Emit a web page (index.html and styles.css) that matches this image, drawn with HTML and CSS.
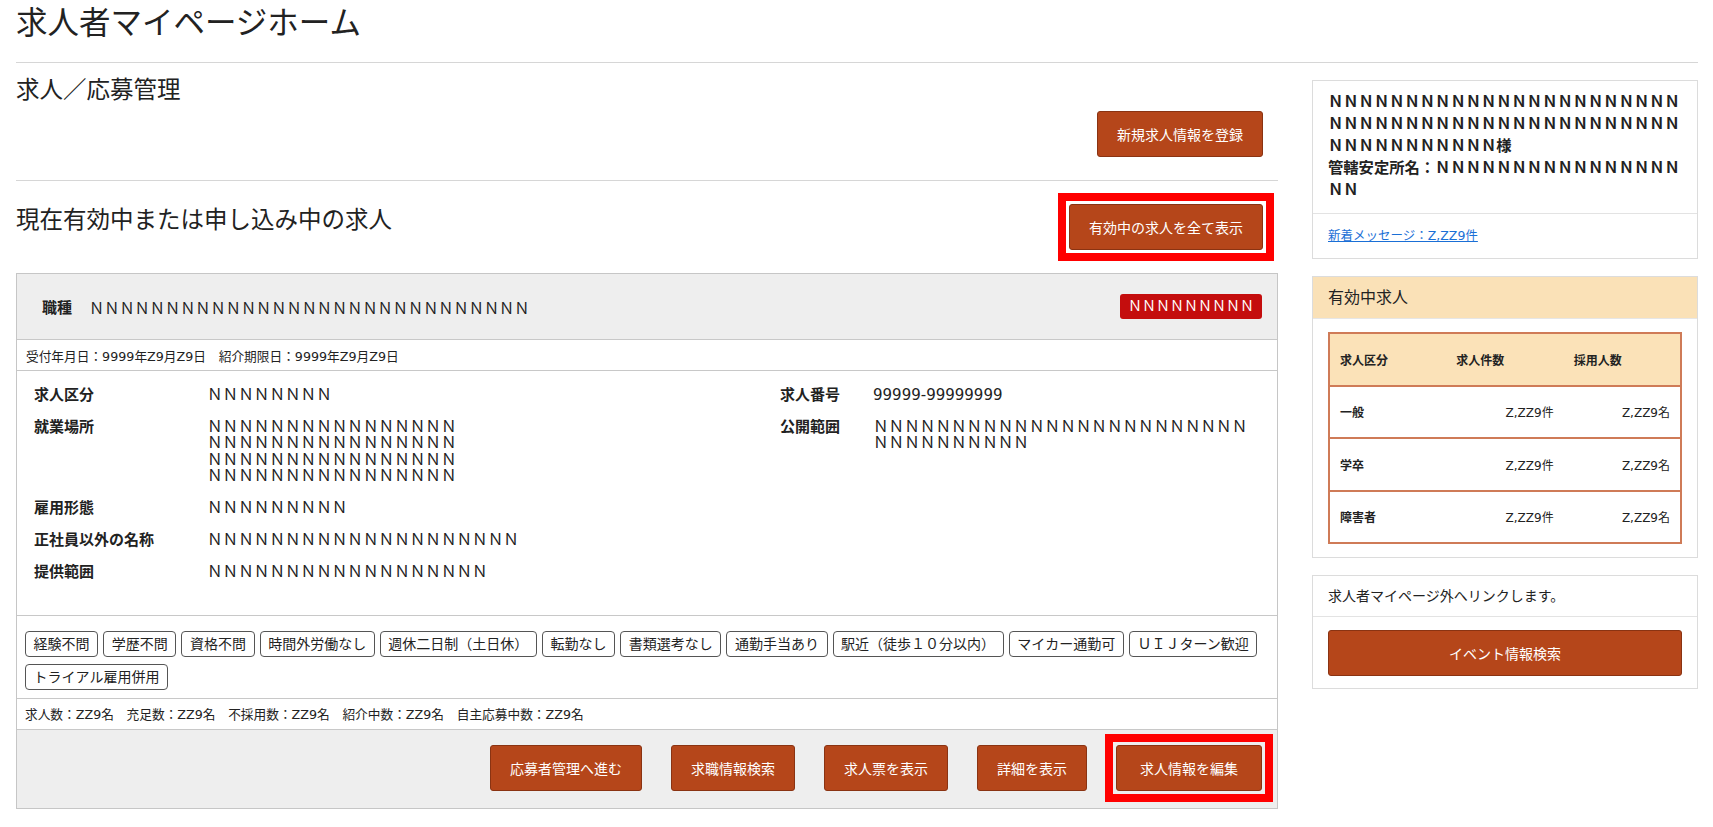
FILE: index.html
```html
<!DOCTYPE html>
<html lang="ja">
<head>
<meta charset="utf-8">
<title>求人者マイページホーム</title>
<link rel="stylesheet" href="styles.css">
</head>
<body>
<div class="page">
  <h1 class="page-title">求人者マイページホーム</h1>
  <div class="layout">
    <main class="main-col">
      <section class="sec-manage">
        <h2 class="sec-title">求人／応募管理</h2>
        <div class="btn-row"><a class="btn" href="#">新規求人情報を登録</a></div>
      </section>
      <section class="sec-active">
        <div class="active-head">
          <h2 class="sec-title">現在有効中または申し込み中の求人</h2>
          <a class="btn mark" href="#">有効中の求人を全て表示</a>
        </div>
        <article class="card">
          <div class="card-head">
            <span class="job-label">職種</span>
            <span class="job-name">ＮＮＮＮＮＮＮＮＮＮＮＮＮＮＮＮＮＮＮＮＮＮＮＮＮＮＮＮＮ</span>
            <span class="badge">ＮＮＮＮＮＮＮＮＮ</span>
          </div>
          <div class="card-dates">受付年月日：9999年Z9月Z9日　紹介期限日：9999年Z9月Z9日</div>
          <div class="card-details">
            <dl class="dlist dlist-left">
              <div class="drow"><dt>求人区分</dt><dd>ＮＮＮＮＮＮＮＮ</dd></div>
              <div class="drow"><dt>就業場所</dt><dd>ＮＮＮＮＮＮＮＮＮＮＮＮＮＮＮＮ<br>ＮＮＮＮＮＮＮＮＮＮＮＮＮＮＮＮ<br>ＮＮＮＮＮＮＮＮＮＮＮＮＮＮＮＮ<br>ＮＮＮＮＮＮＮＮＮＮＮＮＮＮＮＮ</dd></div>
              <div class="drow"><dt>雇用形態</dt><dd>ＮＮＮＮＮＮＮＮＮ</dd></div>
              <div class="drow"><dt>正社員以外の名称</dt><dd>ＮＮＮＮＮＮＮＮＮＮＮＮＮＮＮＮＮＮＮＮ</dd></div>
              <div class="drow"><dt>提供範囲</dt><dd>ＮＮＮＮＮＮＮＮＮＮＮＮＮＮＮＮＮＮ</dd></div>
            </dl>
            <dl class="dlist dlist-right">
              <div class="drow"><dt>求人番号</dt><dd class="num">99999-99999999</dd></div>
              <div class="drow"><dt>公開範囲</dt><dd>ＮＮＮＮＮＮＮＮＮＮＮＮＮＮＮＮＮＮＮＮＮＮＮＮＮＮＮＮＮＮＮＮＮＮ</dd></div>
            </dl>
          </div>
          <div class="card-tags">
            <span class="tag">経験不問</span>
            <span class="tag">学歴不問</span>
            <span class="tag">資格不問</span>
            <span class="tag">時間外労働なし</span>
            <span class="tag">週休二日制（土日休）</span>
            <span class="tag">転勤なし</span>
            <span class="tag">書類選考なし</span>
            <span class="tag">通勤手当あり</span>
            <span class="tag">駅近（徒歩１０分以内）</span>
            <span class="tag">マイカー通勤可</span>
            <span class="tag">ＵＩＪターン歓迎</span>
            <span class="tag">トライアル雇用併用</span>
          </div>
          <div class="card-counts">求人数：ZZ9名　充足数：ZZ9名　不採用数：ZZ9名　紹介中数：ZZ9名　自主応募中数：ZZ9名</div>
          <div class="card-foot">
            <a class="btn" href="#">応募者管理へ進む</a>
            <a class="btn" href="#">求職情報検索</a>
            <a class="btn" href="#">求人票を表示</a>
            <a class="btn" href="#">詳細を表示</a>
            <a class="btn btn-edit mark" href="#">求人情報を編集</a>
          </div>
        </article>
      </section>
    </main>
    <aside class="side">
      <div class="panel">
        <div class="user">
          <p class="user-name">ＮＮＮＮＮＮＮＮＮＮＮＮＮＮＮＮＮＮＮＮＮＮＮＮＮＮＮＮＮＮＮＮＮＮＮＮＮＮＮＮＮＮＮＮＮＮＮＮＮＮＮＮＮＮＮＮＮ様</p>
          <p class="user-office">管轄安定所名：ＮＮＮＮＮＮＮＮＮＮＮＮＮＮＮＮＮＮ</p>
        </div>
        <div class="msg"><a class="msg-link" href="#">新着メッセージ：Z,ZZ9件</a></div>
      </div>
      <div class="panel">
        <div class="panel-head">有効中求人</div>
        <div class="panel-body">
          <table class="stats">
            <thead>
              <tr><th>求人区分</th><th>求人件数</th><th>採用人数</th></tr>
            </thead>
            <tbody>
              <tr><td class="cat">一般</td><td>Z,ZZ9件</td><td>Z,ZZ9名</td></tr>
              <tr><td class="cat">学卒</td><td>Z,ZZ9件</td><td>Z,ZZ9名</td></tr>
              <tr><td class="cat">障害者</td><td>Z,ZZ9件</td><td>Z,ZZ9名</td></tr>
            </tbody>
          </table>
        </div>
      </div>
      <div class="panel">
        <div class="ext-note">求人者マイページ外へリンクします。</div>
        <div class="panel-btn"><a class="btn btn-block" href="#">イベント情報検索</a></div>
      </div>
    </aside>
  </div>
</div>
</body>
</html>
```

FILE: styles.css
```css
* {
  box-sizing: border-box;
}

body {
  margin: 0;
  background: #fff;
  color: #222;
  font-family: "DejaVu Sans", "Noto Sans CJK JP", sans-serif;
}

.page {
  padding: 0 15px 20px 16px;
}

.page-title {
  margin: 0;
  font-size: 31.5px;
  font-weight: normal;
  line-height: 46px;
  padding-bottom: 16px;
  border-bottom: 1px solid #d6d6d6;
}

.layout {
  display: grid;
  grid-template-columns: 1262px 386px;
  column-gap: 34px;
  align-items: start;
}

.sec-manage {
  padding-top: 10px;
  padding-bottom: 23px;
  border-bottom: 1px solid #d6d6d6;
}

.sec-title {
  margin: 0;
  font-size: 23.5px;
  font-weight: normal;
  line-height: 34px;
}

.btn-row {
  display: flex;
  justify-content: flex-end;
  padding-right: 15px;
  margin-top: 4px;
}

.btn {
  display: inline-flex;
  align-items: center;
  justify-content: center;
  height: 46px;
  padding: 0 19px;
  background: #b5461a;
  border: 1px solid #8a3312;
  border-radius: 3px;
  color: #fff;
  font-size: 14px;
  text-decoration: none;
  white-space: nowrap;
}

.btn-edit {
  padding: 0 23px;
}

/* red annotation frame drawn over the button */
.mark {
  position: relative;
}

.mark::after {
  content: "";
  position: absolute;
  inset: -12px;
  border: 8px solid #ff0000;
  pointer-events: none;
}

.active-head {
  display: flex;
  justify-content: space-between;
  align-items: flex-start;
  padding: 22px 15px 0 0;
}

.active-head .btn {
  margin-top: 1px;
}

.card {
  margin-top: 23px;
  border: 1px solid #c6c6c6;
}

.card-head {
  display: flex;
  align-items: center;
  height: 66px;
  padding: 0 15px 0 25px;
  background: #eeeeee;
  border-bottom: 1px solid #c8c8c8;
}

.job-label {
  font-weight: bold;
  font-size: 15px;
  margin-right: 17px;
}

.job-name {
  flex: 1;
  font-size: 15.2px;
}

.badge {
  height: 25px;
  line-height: 25px;
  padding: 0 8px;
  background: #c40d0d;
  border-radius: 3px;
  color: #fff;
  font-size: 14px;
}

.card-dates,
.card-counts {
  display: flex;
  align-items: center;
  height: 31px;
  font-size: 12.7px;
  border-bottom: 1px solid #c8c8c8;
}

.card-dates {
  padding: 0 9px;
}

.card-counts {
  padding: 0 8px;
}

.card-details {
  display: grid;
  grid-template-columns: 746px 1fr;
  padding: 16px 20px 34px 17px;
  border-bottom: 1px solid #c8c8c8;
}

.dlist {
  margin: 0;
}

.drow {
  display: flex;
  margin-bottom: 16px;
  font-size: 15px;
  line-height: 16.2px;
}

.drow:last-child {
  margin-bottom: 0;
}

.drow dt {
  flex: none;
  font-weight: bold;
}

.dlist-left dt {
  width: 173px;
}

.dlist-right dt {
  width: 93px;
}

.drow dd {
  margin: 0;
  flex: 1;
  font-size: 15.6px;
  word-break: break-all;
}

.drow dd.num {
  font-size: 15px;
}

.card-tags {
  display: flex;
  flex-wrap: wrap;
  gap: 7px 5px;
  padding: 15px 8px 8px;
  border-bottom: 1px solid #c8c8c8;
}

.tag {
  height: 26px;
  line-height: 24px;
  padding: 0 7.6px;
  border: 1px solid #555;
  border-radius: 4px;
  font-size: 14px;
  background: #fff;
}

.card-foot {
  display: flex;
  justify-content: flex-end;
  gap: 29px;
  padding: 15px 15px 17px;
  background: #eeeeee;
}

.side {
  padding-top: 17px;
}

.panel {
  border: 1px solid #dcdcdc;
  background: #fff;
}

.panel + .panel {
  margin-top: 17px;
}

.user {
  padding: 10px 15px 12px;
  font-size: 15.3px;
  font-weight: bold;
  line-height: 22px;
  border-bottom: 1px solid #e3e3e3;
}

.user p {
  margin: 0;
  word-break: break-all;
}

.msg {
  padding: 11px 15px 12px;
  font-size: 12.5px;
  line-height: 21px;
}

.msg-link {
  color: #1a6fd6;
  text-decoration: underline;
}

.panel-head {
  padding: 0 15px;
  line-height: 41px;
  font-size: 16px;
  background: #fae1b7;
  border-bottom: 1px solid #e6e6e6;
}

.panel-body {
  padding: 13px 15px;
}

.stats {
  width: 100%;
  border-collapse: collapse;
  table-layout: fixed;
  border: 2px solid #cf7b57;
  font-size: 12px;
}

.stats th,
.stats td {
  height: 52.5px;
  padding: 0 10px;
  border-bottom: 2px solid #cf7b57;
}

.stats th {
  text-align: left;
  font-weight: bold;
  background: #fbe2b8;
}

.stats td {
  text-align: right;
}

.stats td.cat {
  text-align: left;
  font-weight: bold;
}

.ext-note {
  padding: 0 15px;
  line-height: 40px;
  font-size: 14px;
  border-bottom: 1px solid #e3e3e3;
}

.panel-btn {
  padding: 13px 15px 12px;
}

.btn-block {
  display: flex;
  width: 100%;
}
```
